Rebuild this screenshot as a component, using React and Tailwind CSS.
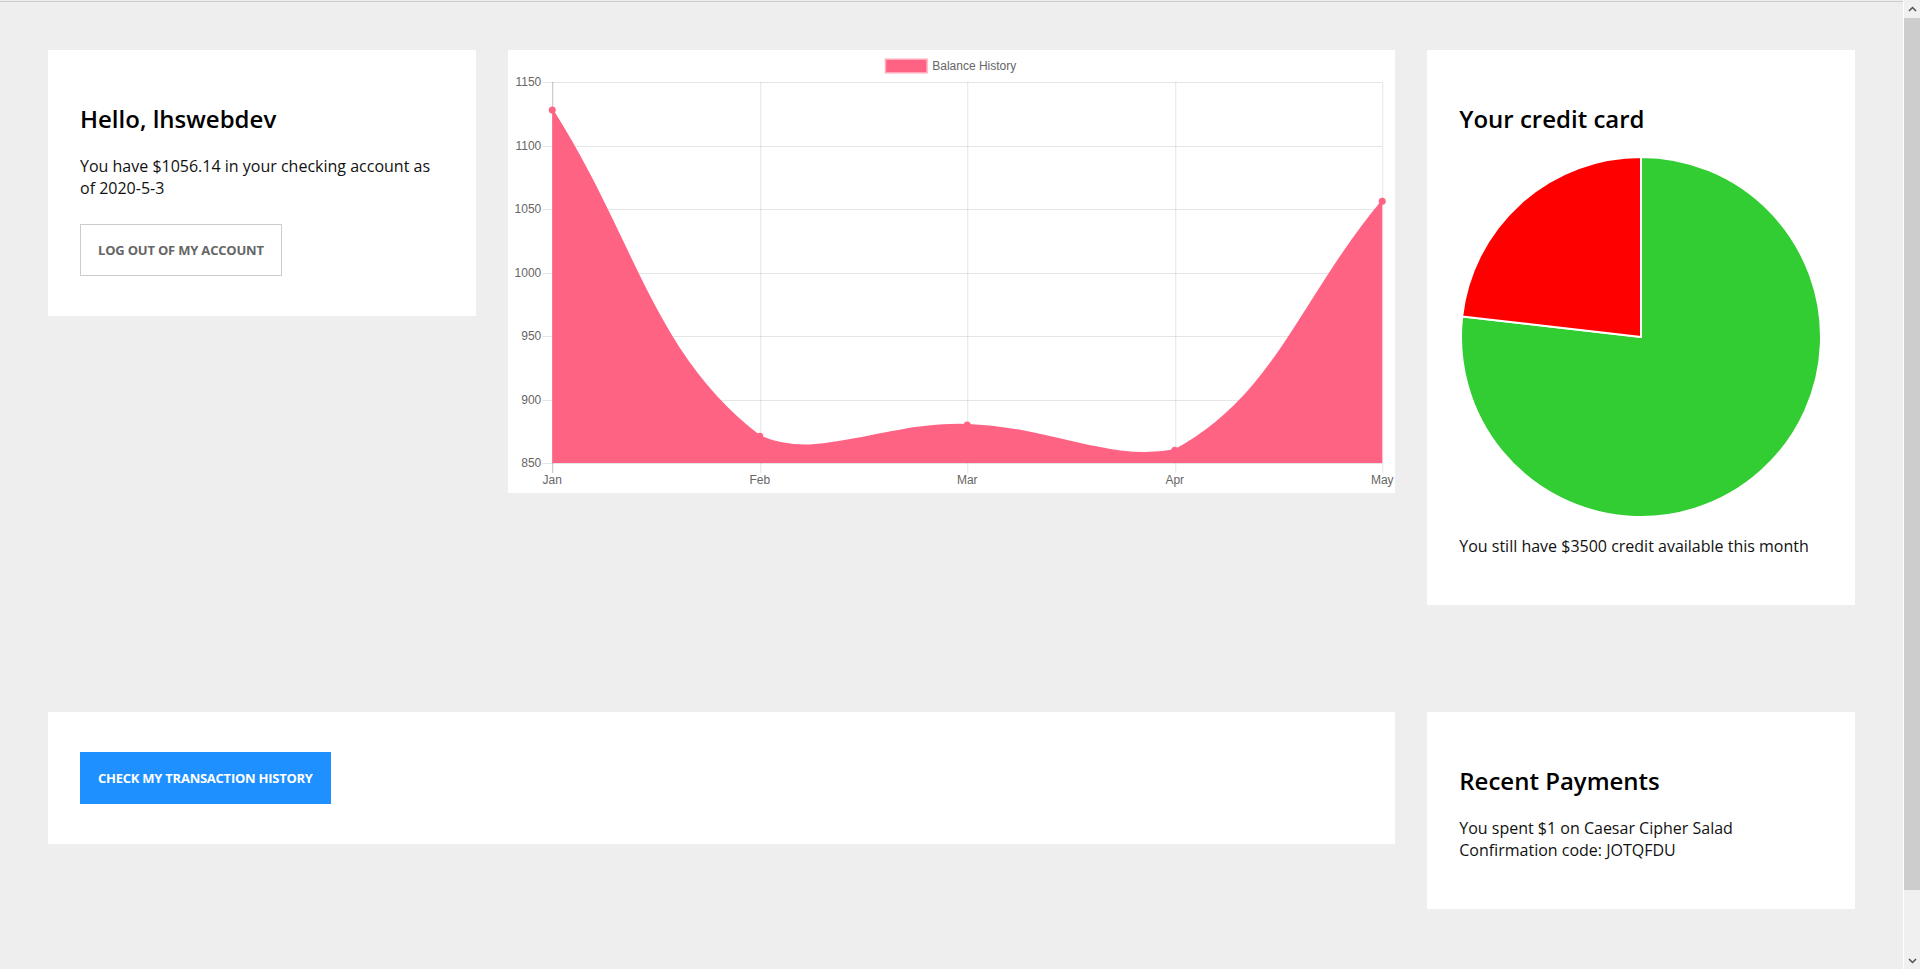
import React from 'react';

const months = ['Jan', 'Feb', 'Mar', 'Apr', 'May'];
const balances = [1128, 871, 880, 860, 1056.14];
const yTicks = [1150, 1100, 1050, 1000, 950, 900, 850];

// plot area inside the 887x443 chart canvas
const area = { left: 44, right: 874, top: 32, bottom: 413 };
const yMin = 850;
const yMax = 1150;

const px = (i) => area.left + (i * (area.right - area.left)) / (months.length - 1);
const py = (v) => area.bottom - ((v - yMin) / (yMax - yMin)) * (area.bottom - area.top);

const clamp = (v, lo, hi) => Math.max(lo, Math.min(hi, v));

// same cardinal spline the chart lib uses (tension 0.4)
function splinePath(pts, t = 0.4) {
  const ctrl = pts.map((p, i) => {
    const prev = pts[i - 1] || p;
    const next = pts[i + 1] || p;
    const d01 = Math.hypot(p.x - prev.x, p.y - prev.y);
    const d12 = Math.hypot(next.x - p.x, next.y - p.y);
    const s01 = d01 + d12 ? d01 / (d01 + d12) : 0;
    const s12 = d01 + d12 ? d12 / (d01 + d12) : 0;
    const cap = (c) => ({
      x: clamp(c.x, area.left, area.right),
      y: clamp(c.y, area.top, area.bottom),
    });
    return {
      prev: cap({ x: p.x - t * s01 * (next.x - prev.x), y: p.y - t * s01 * (next.y - prev.y) }),
      next: cap({ x: p.x + t * s12 * (next.x - prev.x), y: p.y + t * s12 * (next.y - prev.y) }),
    };
  });
  let d = `M ${pts[0].x} ${pts[0].y}`;
  for (let i = 1; i < pts.length; i++) {
    const a = ctrl[i - 1].next;
    const b = ctrl[i].prev;
    d += ` C ${a.x} ${a.y} ${b.x} ${b.y} ${pts[i].x} ${pts[i].y}`;
  }
  return d;
}

const BalanceChart = () => {
  const pts = balances.map((v, i) => ({ x: px(i), y: py(v) }));
  const line = splinePath(pts);
  const fill = `${line} L ${area.right} ${area.bottom} L ${area.left} ${area.bottom} Z`;

  return (
    <svg className="block h-[443px] w-full" viewBox="0 0 887 443" fontFamily="'Liberation Sans', Arial, sans-serif" fontSize="12">
      {/* legend */}
      <rect x="378" y="10" width="40" height="12" fill="#ff6384" stroke="rgba(255,99,132,0.55)" strokeWidth="3" />
      <text x="424" y="16" dominantBaseline="central" fill="#666">Balance History</text>

      {/* grid */}
      {yTicks.map((v) => (
        <g key={v}>
          <line x1={area.left - 10} x2={area.right} y1={Math.round(py(v)) + 0.5} y2={Math.round(py(v)) + 0.5} stroke="rgba(0,0,0,0.1)" />
          <text x={area.left - 11} y={py(v)} textAnchor="end" dominantBaseline="central" fill="#666">
            {v}
          </text>
        </g>
      ))}
      {months.map((m, i) => (
        <g key={m}>
          <line
            x1={Math.round(px(i)) + 0.5}
            x2={Math.round(px(i)) + 0.5}
            y1={area.top}
            y2={area.bottom + 10}
            stroke={i === 0 ? 'rgba(0,0,0,0.25)' : 'rgba(0,0,0,0.1)'}
          />
          <text x={px(i)} y="430" textAnchor="middle" dominantBaseline="central" fill="#666">
            {m}
          </text>
        </g>
      ))}

      {/* data */}
      <path d={fill} fill="#ff6384" />
      <path d={line} fill="none" stroke="#ff6384" strokeWidth="2" />
      {pts.map((p, i) => (
        <circle key={i} cx={p.x} cy={p.y} r="3.5" fill="#ff6384" />
      ))}
    </svg>
  );
};

const CreditPie = () => {
  const slices = [
    { value: 3500, color: '#32cd32' },
    { value: 1056.14, color: '#ff0000' },
  ];
  const total = slices.reduce((s, x) => s + x.value, 0);
  const cx = 182;
  const cy = 182;
  const r = 180;
  let angle = -Math.PI / 2;

  return (
    <svg className="mt-5 block h-[364px] w-[364px]" viewBox="0 0 364 364">
      {slices.map((s) => {
        const start = angle;
        const sweep = (s.value / total) * Math.PI * 2;
        angle += sweep;
        const x1 = cx + r * Math.cos(start);
        const y1 = cy + r * Math.sin(start);
        const x2 = cx + r * Math.cos(angle);
        const y2 = cy + r * Math.sin(angle);
        const large = sweep > Math.PI ? 1 : 0;
        return (
          <path
            key={s.color}
            d={`M ${cx} ${cy} L ${x1} ${y1} A ${r} ${r} 0 ${large} 1 ${x2} ${y2} Z`}
            fill={s.color}
            stroke="#fff"
            strokeWidth="2"
            strokeLinejoin="miter"
          />
        );
      })}
    </svg>
  );
};

const Scrollbar = () => (
  <div className="flex h-screen w-[17px] shrink-0 flex-col border-l border-white bg-[#f0f0f0]">
    <div className="flex h-[17px] items-center justify-center">
      <svg width="9" height="6" viewBox="0 0 9 6">
        <polyline points="1,5 4.5,1.5 8,5" fill="none" stroke="#505050" strokeWidth="1.5" />
      </svg>
    </div>
    <div className="mt-px h-[872px] bg-[#cdcdcd]" />
    <div className="flex-1" />
    <div className="flex h-[17px] items-center justify-center">
      <svg width="9" height="6" viewBox="0 0 9 6">
        <polyline points="1,1 4.5,4.5 8,1" fill="none" stroke="#505050" strokeWidth="1.5" />
      </svg>
    </div>
  </div>
);

export default function App() {
  return (
    <div className="flex h-screen overflow-hidden bg-[#eeeeee] font-['Open_Sans',sans-serif] text-[16px] text-[#111]">
      <div className="min-w-0 flex-1">
        <div className="mt-px h-px bg-[#cccccc]" />
        <main className="grid grid-cols-4 items-start gap-x-8 gap-y-[107px] px-12 pt-12">
          <section className="bg-white p-8">
            <h2 className="mt-5 mb-5 text-[24px] font-semibold leading-[normal] text-black">Hello, lhswebdev</h2>
            <p className="leading-[normal]">You have $1056.14 in your checking account as of 2020-5-3</p>
            <button className="mt-[25px] mb-2 border border-[#cccccc] bg-white px-[17px] py-4 text-[13px] font-bold uppercase leading-[normal] tracking-[-0.2px] text-[#666]">
              Log out of my account
            </button>
          </section>

          <section className="col-span-2 bg-white">
            <BalanceChart />
          </section>

          <section className="bg-white p-8">
            <h2 className="mt-5 text-[24px] font-semibold leading-[normal] text-black">Your credit card</h2>
            <CreditPie />
            <p className="mt-4 mb-4 leading-[normal]">You still have $3500 credit available this month</p>
          </section>

          <section className="col-span-3 bg-white p-8">
            <button className="my-2 border border-[#1e90ff] bg-[#1e90ff] px-[17px] py-4 text-[13px] font-bold uppercase leading-[normal] tracking-[-0.25px] text-white">
              Check my transaction history
            </button>
          </section>

          <section className="bg-white p-8">
            <h2 className="mt-5 mb-5 text-[24px] font-semibold leading-[normal] text-black">Recent Payments</h2>
            <div className="mb-4 leading-[normal]">
              <div>You spent $1 on Caesar Cipher Salad</div>
              <div>Confirmation code: JOTQFDU</div>
            </div>
          </section>
        </main>
      </div>
      <Scrollbar />
    </div>
  );
}
